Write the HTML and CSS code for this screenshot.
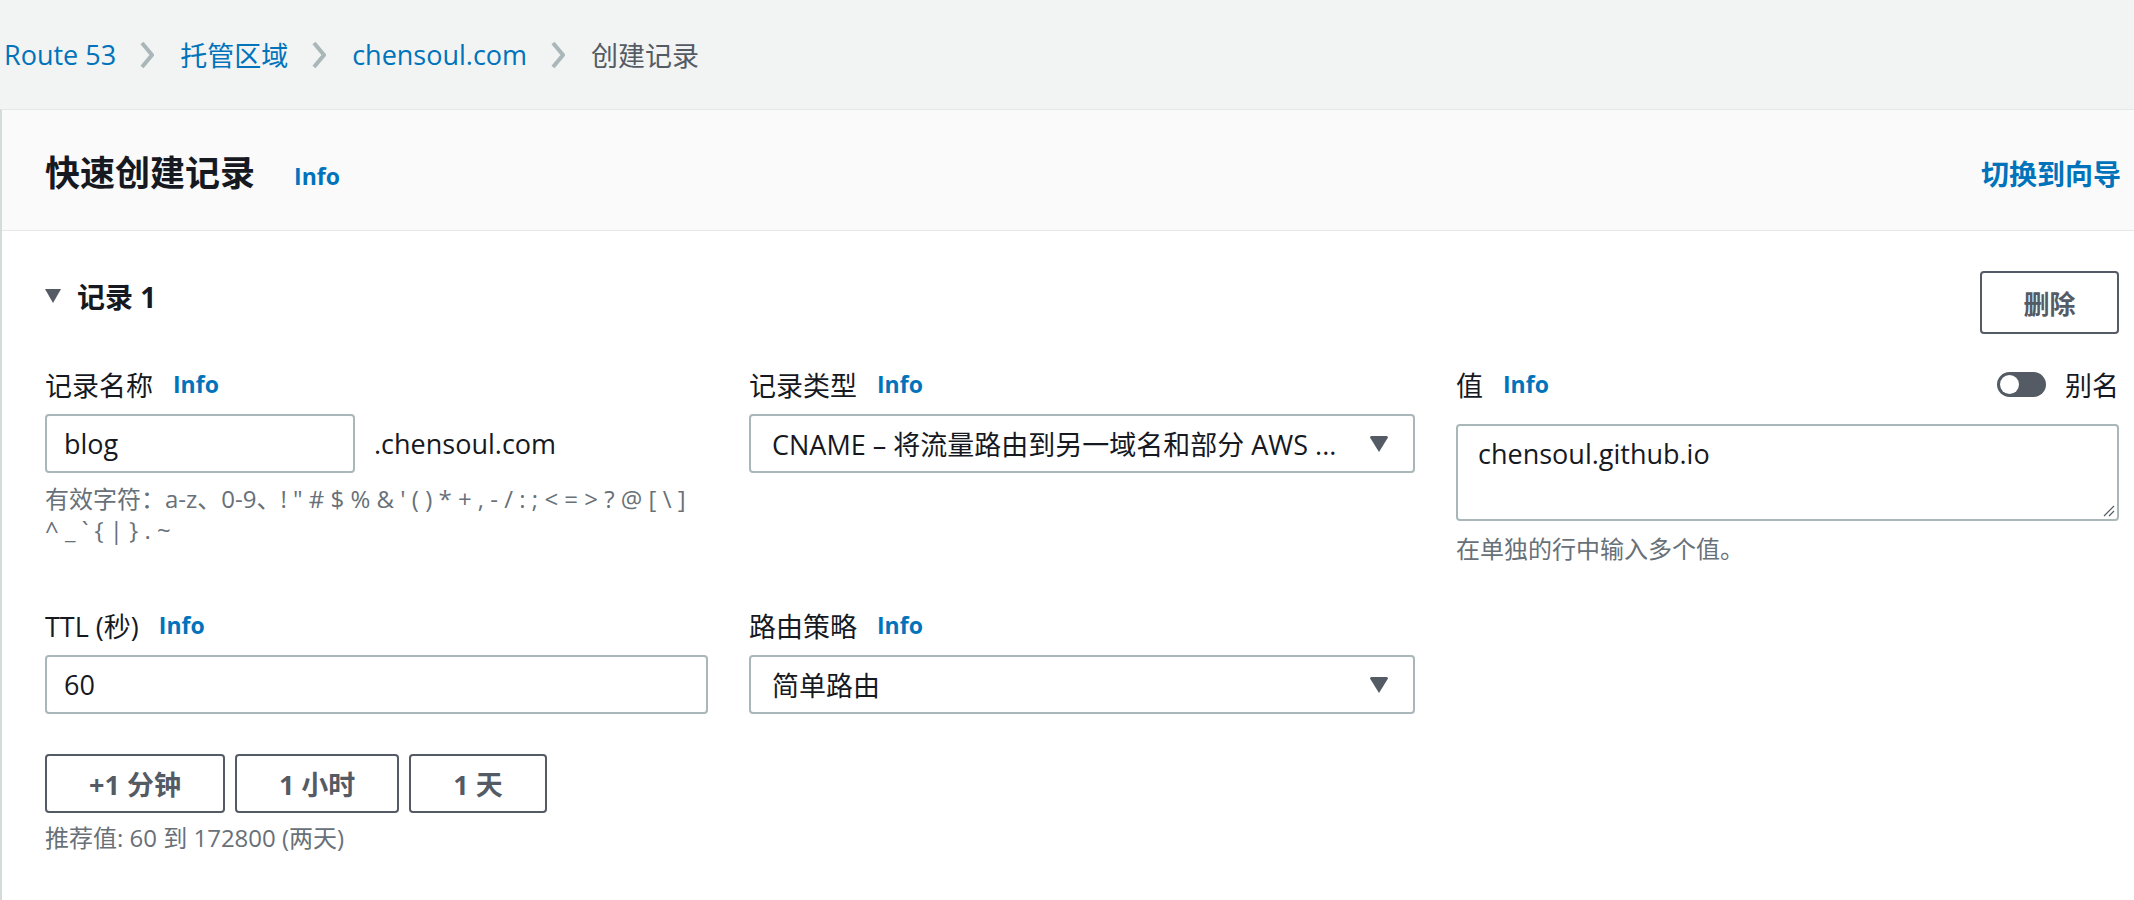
FILE: index.html
```html
<!DOCTYPE html>
<html lang="zh-CN">
<head>
<meta charset="utf-8">
<title>快速创建记录</title>
<link rel="stylesheet" href="styles.css">
</head>
<body>
<nav class="crumbs">
  <a class="crumb-link">Route 53</a>
  <svg class="chev" width="14" height="28" viewBox="0 0 14 28"><polyline points="2,2 12,14 2,26" fill="none" stroke="#aab7b8" stroke-width="4"/></svg>
  <a class="crumb-link">托管区域</a>
  <svg class="chev" width="14" height="28" viewBox="0 0 14 28"><polyline points="2,2 12,14 2,26" fill="none" stroke="#aab7b8" stroke-width="4"/></svg>
  <a class="crumb-link">chensoul.com</a>
  <svg class="chev" width="14" height="28" viewBox="0 0 14 28"><polyline points="2,2 12,14 2,26" fill="none" stroke="#aab7b8" stroke-width="4"/></svg>
  <span class="crumb-current">创建记录</span>
</nav>

<section class="panel">
  <header class="panel-head">
    <h2 class="title">快速创建记录</h2>
    <a class="info info-title">Info</a>
    <a class="switch">切换到向导</a>
  </header>

  <div class="panel-body">
    <div class="rec-head">
      <div class="rec-title"><span class="caret"></span><span>记录 1</span></div>
      <button class="btn btn-delete">删除</button>
    </div>

    <div class="grid">
      <div class="field">
        <div class="label"><span>记录名称</span><a class="info">Info</a></div>
        <div class="name-row">
          <div class="input input-name">blog</div>
          <span class="suffix">.chensoul.com</span>
        </div>
        <div class="hint">有效字符：a-z、0-9、! " # $ % &amp; ' ( ) * + , - / : ; &lt; = &gt; ? @ [ \ ]<br>^ _ ` { | } . ~</div>
      </div>

      <div class="field">
        <div class="label"><span>记录类型</span><a class="info">Info</a></div>
        <div class="input select">
          <span class="select-text">CNAME – 将流量路由到另一域名和部分 AWS ...</span>
          <svg class="tri" width="20" height="16" viewBox="0 0 20 16"><path d="M1 1.5 Q1 0 2.5 0 H17.5 Q19 0 19 1.5 L10 16 Z" fill="#545b64"/></svg>
        </div>
      </div>

      <div class="field">
        <div class="label label-value">
          <div class="label-left"><span>值</span><a class="info">Info</a></div>
          <div class="alias"><span class="toggle"><span class="knob"></span></span><span>别名</span></div>
        </div>
        <div class="input textarea">
          <span>chensoul.github.io</span>
          <svg class="grip" width="14" height="14" viewBox="0 0 14 14"><path d="M13 3 L3 13 M13 8 L8 13" stroke="#545b64" stroke-width="1.2"/></svg>
        </div>
        <div class="hint hint-value">在单独的行中输入多个值。</div>
      </div>

      <div class="field">
        <div class="label"><span>TTL (秒)</span><a class="info">Info</a></div>
        <div class="input">60</div>
        <div class="ttl-buttons">
          <button class="btn btn-ttl">+1 分钟</button>
          <button class="btn btn-ttl">1 小时</button>
          <button class="btn btn-ttl">1 天</button>
        </div>
        <div class="hint hint-ttl">推荐值: 60 到 172800 (两天)</div>
      </div>

      <div class="field">
        <div class="label"><span>路由策略</span><a class="info">Info</a></div>
        <div class="input select">
          <span class="select-text">简单路由</span>
          <svg class="tri" width="20" height="16" viewBox="0 0 20 16"><path d="M1 1.5 Q1 0 2.5 0 H17.5 Q19 0 19 1.5 L10 16 Z" fill="#545b64"/></svg>
        </div>
      </div>
    </div>
  </div>
</section>
</body>
</html>
```

FILE: styles.css
```css
html, body {
  margin: 0;
  padding: 0;
}

body {
  width: 2134px;
  height: 900px;
  overflow: hidden;
  background: #ffffff;
  font-family: "Open Sans", "Noto Sans CJK SC", sans-serif;
  color: #16191f;
  font-size: 27px;
}

a {
  text-decoration: none;
  cursor: pointer;
}

/* breadcrumbs */
.crumbs {
  height: 109px;
  background: #f2f3f3;
  display: flex;
  align-items: center;
  padding-left: 4px;
  font-size: 27px;
}

.crumb-link {
  color: #0073bb;
}

.crumb-current {
  color: #545b64;
}

.chev {
  margin: 0 26px 0 24px;
  display: block;
}

/* panel */
.panel {
  border-left: 2px solid #d5dbdb;
  border-top: 1px solid #e4e8e8;
  background: #ffffff;
}

.panel-head {
  height: 121px;
  box-sizing: border-box;
  background: #fafafa;
  border-bottom: 1px solid #e4e8e8;
  display: flex;
  align-items: center;
  padding: 5px 13px 0 43px;
}

.title {
  margin: 0;
  font-size: 35px;
  font-weight: 700;
  line-height: 48px;
}

.info {
  color: #0073bb;
  font-weight: 700;
  font-size: 23px;
}

.info-title {
  margin-left: 39px;
  margin-top: 6px;
}

.switch {
  margin-left: auto;
  color: #0073bb;
  font-weight: 700;
  font-size: 28px;
}

.panel-body {
  padding: 40px 15px 60px 43px;
}

.rec-head {
  display: flex;
  justify-content: space-between;
  align-items: flex-start;
}

.rec-title {
  display: flex;
  align-items: center;
  height: 50px;
  font-size: 28px;
  font-weight: 700;
}

.caret {
  width: 0;
  height: 0;
  border-left: 8.5px solid transparent;
  border-right: 8.5px solid transparent;
  border-top: 14px solid #545b64;
  margin-right: 16px;
}

.btn {
  box-sizing: border-box;
  background: #ffffff;
  border: 2px solid #545b64;
  border-radius: 4px;
  color: #545b64;
  font-family: "Open Sans", "Noto Sans CJK SC", sans-serif;
  font-weight: 700;
  font-size: 26px;
  padding: 0;
  margin: 0;
}

.btn-delete {
  width: 139px;
  height: 63px;
}

/* grid */
.grid {
  margin-top: 30px;
  display: grid;
  grid-template-columns: 663px 666px 663px;
  column-gap: 41px;
  row-gap: 41px;
}

.field {
  display: flex;
  flex-direction: column;
  align-items: stretch;
}

.label {
  height: 40px;
  display: flex;
  align-items: center;
  gap: 20px;
  margin-bottom: 10px;
  font-size: 27px;
}

.label-value {
  justify-content: space-between;
  margin-bottom: 20px;
}

.label-left {
  display: flex;
  align-items: center;
  gap: 20px;
}

.alias {
  display: flex;
  align-items: center;
  gap: 19px;
}

.toggle {
  width: 49px;
  height: 25px;
  box-sizing: border-box;
  border-radius: 13px;
  background: #545b64;
  display: flex;
  align-items: center;
  padding-left: 3px;
}

.knob {
  width: 19px;
  height: 19px;
  border-radius: 50%;
  background: #ffffff;
}

.input {
  box-sizing: border-box;
  height: 59px;
  border: 2px solid #aab7b8;
  border-radius: 4px;
  background: #ffffff;
  display: flex;
  align-items: center;
  padding-left: 17px;
  font-size: 27px;
  color: #16191f;
}

.name-row {
  display: flex;
  align-items: center;
}

.input-name {
  width: 310px;
}

.suffix {
  margin-left: 19px;
}

.select {
  padding: 0 24px 0 21px;
  justify-content: space-between;
}

.select-text {
  white-space: nowrap;
  overflow: hidden;
}

.tri {
  flex: none;
  display: block;
}

.textarea {
  position: relative;
  height: 97px;
  align-items: flex-start;
  padding: 10px 20px;
  line-height: 36px;
}

.grip {
  position: absolute;
  right: 2px;
  bottom: 2px;
}

.hint {
  margin-top: 10px;
  font-size: 24px;
  line-height: 31px;
  color: #687078;
}

.hint-value {
  margin-top: 12px;
}

.ttl-buttons {
  display: flex;
  gap: 10px;
  margin-top: 40px;
}

.btn-ttl {
  height: 59px;
  padding: 0 42px;
  font-size: 27px;
}

.hint-ttl {
  margin-top: 9px;
}
```
